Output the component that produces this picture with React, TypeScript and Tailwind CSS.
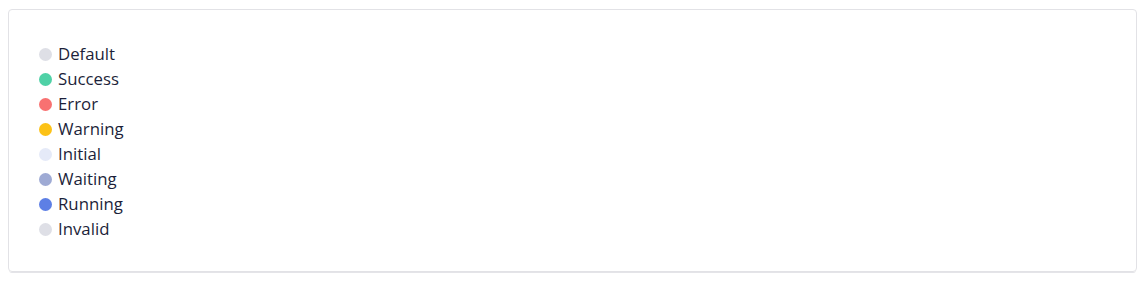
const statuses = [
	{ label: 'Default', color: 'bg-[#dedfe6]' },
	{ label: 'Success', color: 'bg-[#4fd1a6]' },
	{ label: 'Error', color: 'bg-[#f87171]' },
	{ label: 'Warning', color: 'bg-[#fcc216]' },
	{ label: 'Initial', color: 'bg-[#e5eaf8]' },
	{ label: 'Waiting', color: 'bg-[#9eaad4]' },
	{ label: 'Running', color: 'bg-[#5d7fe5]' },
	{ label: 'Invalid', color: 'bg-[#dedfe6]' },
];

export default function App() {
	return (
		<div className="bg-white pt-[9px] px-2 pb-2 font-['Open_Sans',sans-serif]">
			<div className="mr-px rounded border border-[#e2e2e6] shadow-[0_2px_0_-1px_#e4e4e8] pt-[32px] pb-[29px] pl-[30px]">
				<ul className="flex flex-col">
					{statuses.map((s) => (
						<li key={s.label} className="flex items-center gap-[6px] h-[25px]">
							<span className={`size-[13px] rounded-full ${s.color}`} />
							<span className="text-[16.8px] text-[#1c1f3a] leading-none">{s.label}</span>
						</li>
					))}
				</ul>
			</div>
		</div>
	);
}
